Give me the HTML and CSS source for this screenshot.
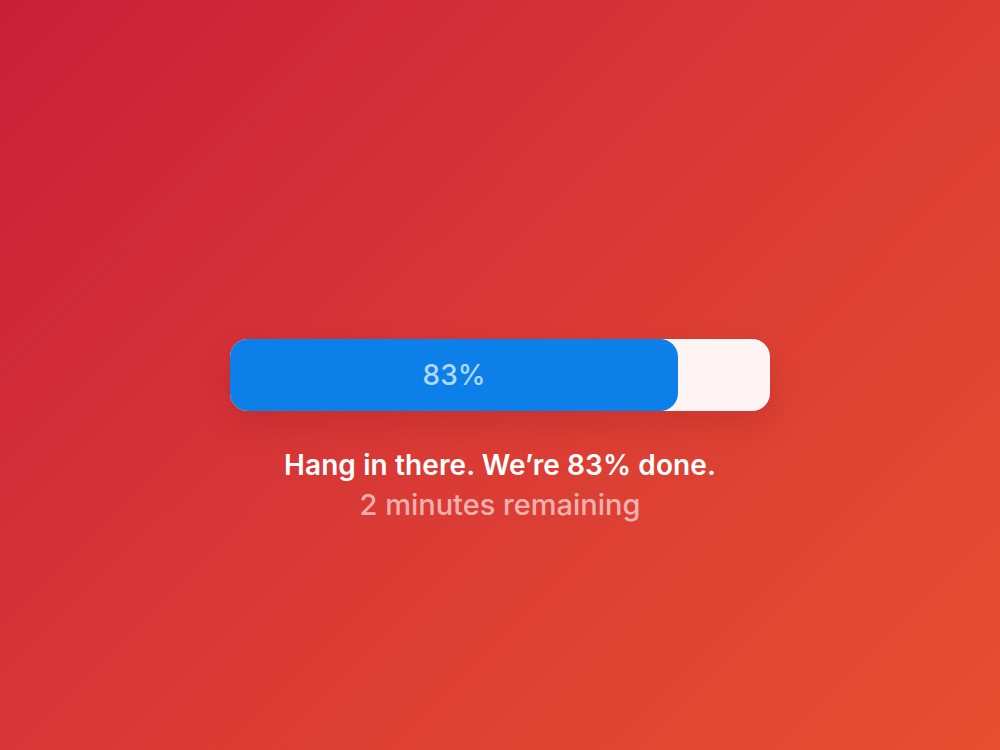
FILE: index.html
```html
<!DOCTYPE html>
<html lang="en">
<head>
    <meta charset="UTF-8">
    <meta name="viewport" content="width=device-width, initial-scale=1.0">
    <title>Progress</title>
    <link rel="stylesheet" href="styles.css">
</head>
<body>
    <main class="page">
        <div class="progress">
            <div class="progress-fill" style="width: 83%;">
                <span class="progress-label">83%</span>
            </div>
        </div>
        <p class="status">Hang in there. We’re 83% done.</p>
        <p class="remaining">2 minutes remaining</p>
    </main>
</body>
</html>
```

FILE: styles.css
```css
/* Page de fond */
body {
    margin: 0;
    font-family: Inter, "Noto Sans", sans-serif;
}

.page {
    width: 1000px;
    height: 750px;
    box-sizing: border-box;
    padding-top: 339px;
    display: flex;
    flex-direction: column;
    align-items: center;
    background: linear-gradient(135deg, #c91f3a 0%, #d93a35 50%, #e64f2f 100%);
}

/* Barre de progression */
.progress {
    width: 540px;
    height: 72px;
    background-color: #fff4f4;
    border-radius: 18px;
    display: flex;
    box-shadow: 0 14px 30px rgba(120, 10, 20, 0.16);
}

.progress-fill {
    background-color: #0c80e8;
    border-radius: 18px;
    display: flex;
    align-items: center;
    justify-content: center;
}

.progress-label {
    color: #b0d8fa;
    font-size: 28px;
    font-weight: 500;
}

/* Textes */
.status {
    margin: 34px 0 0;
    color: #ffffff;
    font-size: 28px;
    font-weight: 600;
    line-height: 40px;
    letter-spacing: 0.1px;
}

.remaining {
    margin: 0;
    color: rgba(255, 255, 255, 0.62);
    font-size: 29px;
    font-weight: 500;
    line-height: 40px;
}
```
